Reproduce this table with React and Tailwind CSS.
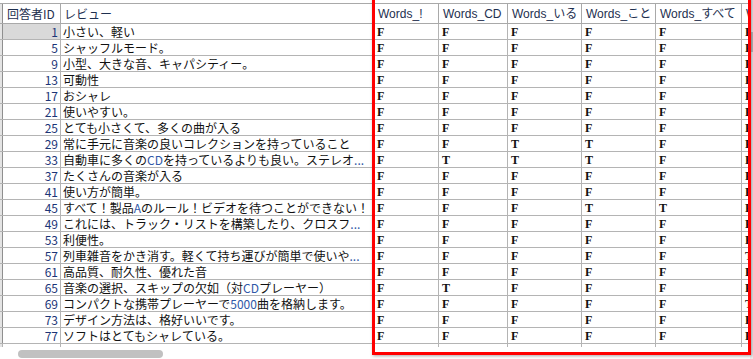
import React from "react"

const cols = [
  { name: "Words_!", w: "w-[65px]" },
  { name: "Words_CD", w: "w-[69px]" },
  { name: "Words_いる", w: "w-[74px]" },
  { name: "Words_こと", w: "w-[74px]" },
  { name: "Words_すべて", w: "w-[86px]" },
  { name: "Words_ない", w: "w-[80px]" },
]

const rows = [
  [1, "小さい、軽い", "FFFFFF"],
  [5, "シャッフルモード。", "FFFFFF"],
  [9, "小型、大きな音、キャパシティー。", "FFFFFF"],
  [13, "可動性", "FFFFFF"],
  [17, "おシャレ", "FFFFFF"],
  [21, "使いやすい。", "FFFFFF"],
  [25, "とても小さくて、多くの曲が入る", "FFFFFF"],
  [29, "常に手元に音楽の良いコレクションを持っていること", "FFTTFF"],
  [33, "自動車に多くのCDを持っているよりも良い。ステレオ...", "FTTTFF"],
  [37, "たくさんの音楽が入る", "FFFFFF"],
  [41, "使い方が簡単。", "FFFFFF"],
  [45, "すべて！製品Aのルール！ビデオを待つことができない！", "FFFTTF"],
  [49, "これには、トラック・リストを構築したり、クロスフ...", "FFFFFF"],
  [53, "利便性。", "FFFFFF"],
  [57, "列車雑音をかき消す。軽くて持ち運びが簡単で使いや...", "FFFFFT"],
  [61, "高品質、耐久性、優れた音", "FFFFFF"],
  [65, "音楽の選択、スキップの欠如（対CDプレーヤー）", "FTFFFF"],
  [69, "コンパクトな携帯プレーヤーで5000曲を格納します。", "FFFFFT"],
  [73, "デザイン方法は、格好いいです。", "FFFFFF"],
  [77, "ソフトはとてもシャレている。", "FFFFFF"],
]

const jp = "font-['Noto_Sans_CJK_JP','Noto_Sans',sans-serif]"

// half-width runs render in the bluish tint seen in the grid
function Review({ text }) {
  const parts = text.split(/([A-Za-z0-9.]+)/)
  return parts.map((p, i) =>
    /^[A-Za-z0-9.]+$/.test(p) ? (
      <span key={i} className="text-[#2f58a8]">{p}</span>
    ) : (
      <span key={i}>{p}</span>
    )
  )
}

function Strip({ className = "" }) {
  return <div className={`w-[3px] shrink-0 bg-[#e4e4e4] border-r border-[#8f8f8f] ${className}`} />
}

export default function App() {
  return (
    <div className="relative w-[753px] h-[359px] overflow-hidden bg-white">
      <div className="pt-[3px]">
        {/* header */}
        <div className="flex w-max h-[21px] border-t border-b border-[#a9a9a9] text-[12px] text-[#1e2f4f]">
          <Strip />
          <div className={`w-[58px] shrink-0 border-r border-[#a9a9a9] pl-[4px] flex items-center ${jp}`}>回答者ID</div>
          <div className={`w-[313px] shrink-0 border-r border-[#a9a9a9] pl-[3px] flex items-center ${jp}`}>レビュー</div>
          {cols.map((c) => (
            <div
              key={c.name}
              className={`${c.w} shrink-0 border-r border-[#a9a9a9] pl-[4px] flex items-center whitespace-nowrap overflow-hidden font-['Liberation_Sans','Noto_Sans_CJK_JP',sans-serif] text-[12px]`}
            >
              {c.name}
            </div>
          ))}
        </div>

        {/* body */}
        {rows.map(([id, text, flags], r) => (
          <div key={id} className="flex w-max h-[16px] border-b border-[#b4b4b4]">
            <Strip />
            <div
              className={`w-[58px] shrink-0 border-r border-[#b4b4b4] pr-[2px] text-right text-[12px] leading-[15px] text-[#1c3577] ${jp} ${r === 0 ? "bg-[#d9d9d9]" : ""}`}
            >
              {id}
            </div>
            <div className={`w-[313px] shrink-0 border-r border-[#b4b4b4] pl-[2px] text-[12px] leading-[15px] text-[#111] whitespace-nowrap overflow-hidden ${jp}`}>
              <Review text={text} />
            </div>
            {cols.map((c, i) => (
              <div
                key={c.name}
                className={`${c.w} shrink-0 border-r border-[#b4b4b4] pl-[3px] text-[12px] leading-[16px] font-bold text-[#111] font-['Liberation_Serif',serif]`}
              >
                {flags[i]}
              </div>
            ))}
          </div>
        ))}

        {/* stub below last row */}
        <div className="flex w-max h-[3px]">
          <Strip className="border-r-[#b4b4b4]" />
          <div className="w-[58px] shrink-0 border-r border-[#b4b4b4]" />
          <div className="w-[313px] shrink-0 border-r border-[#b4b4b4]" />
          {cols.map((c) => (
            <div key={c.name} className={`${c.w} shrink-0 border-r border-[#b4b4b4]`} />
          ))}
        </div>

        {/* horizontal scrollbar */}
        <div className="pt-[3px] pl-[18px]">
          <div className="w-[145px] h-[8px] rounded-full bg-[#c1c1c1]" />
        </div>
      </div>

      {/* vertical scrollbar */}
      <div className="absolute right-0 top-0 w-[3px] h-full bg-[#ececec]">
        <div className="mt-[32px] h-[20px] bg-[#bdbdbd]" />
      </div>

      {/* red highlight box */}
      <div className="absolute left-[372px] top-[-3px] w-[379px] h-[358px] border-[3px] border-[#ff0000] shadow-[1px_1px_3px_rgba(0,0,0,0.35)]" />
    </div>
  )
}
